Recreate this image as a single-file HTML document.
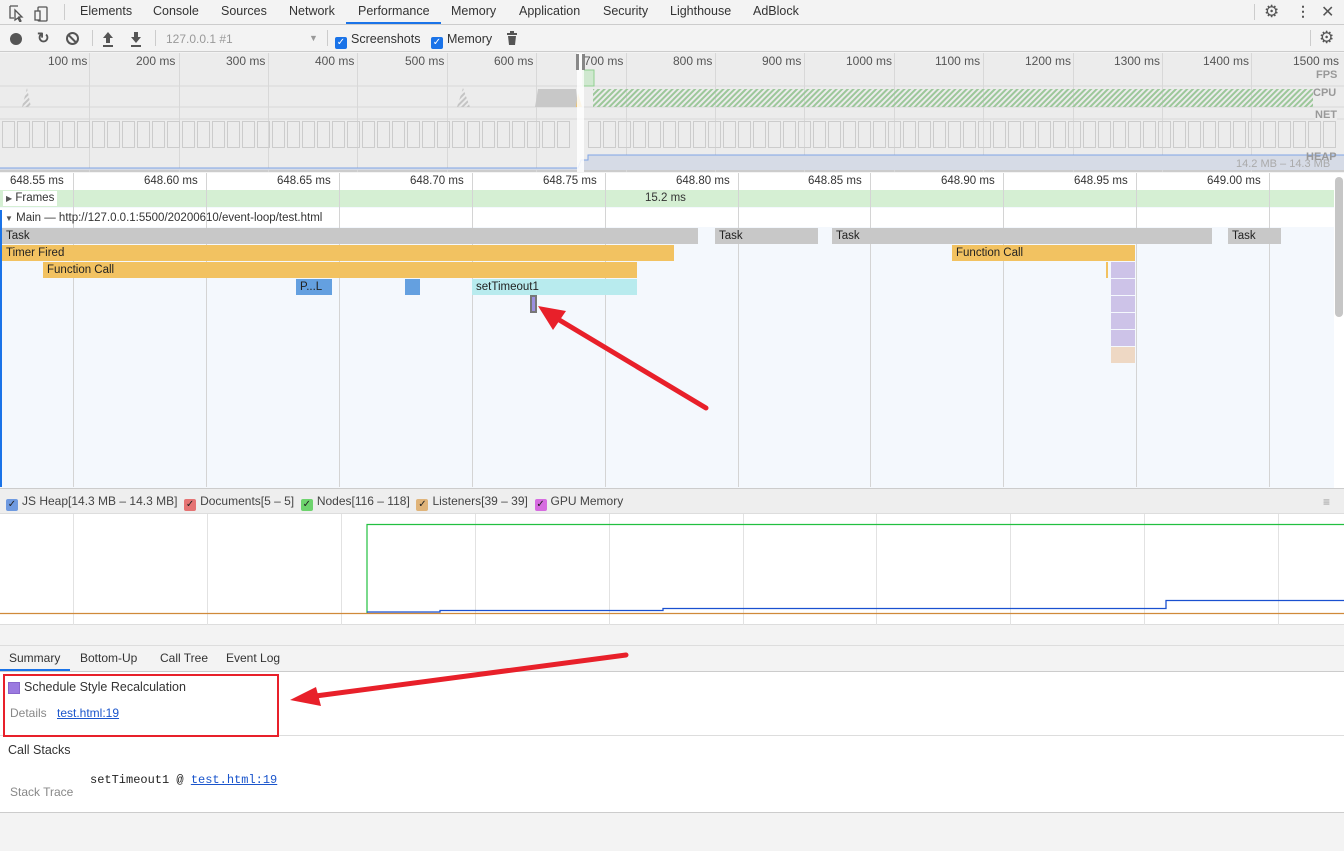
<!DOCTYPE html>
<html><head><meta charset="utf-8"><style>
*{box-sizing:border-box;margin:0;padding:0}
body{width:1344px;height:851px;overflow:hidden;font-family:"Liberation Sans",sans-serif;font-size:12px;color:#333;background:#f3f3f3;position:relative}
.a{position:absolute}
.t{position:absolute;top:4px;font-size:12.5px;color:#333}
.lab{position:absolute;font-size:12px;color:#333;white-space:nowrap}
.bar{position:absolute;height:16px;font-size:11.5px;line-height:16px;padding-left:4px;color:#222;overflow:hidden;white-space:nowrap}
.cb{display:inline-block;width:12px;height:12px;border-radius:2px;vertical-align:-2px;margin-right:4px;color:#fff;font-size:10px;line-height:12px;text-align:center}
</style></head><body>
<div class="a" style="left:0;top:0;width:1344px;height:25px;background:#f3f3f3;border-bottom:1px solid #ccc"></div>
<svg class="a" style="left:8px;top:4px" width="50" height="18"><path d="M2 2h8M2 2v12h4M7 6l7 7-3 0 2 4-1 1-2-4-3 2z" stroke="#555" fill="none" stroke-width="1.3"/><rect x="30" y="3" width="9" height="14" rx="1" stroke="#555" fill="none" stroke-width="1.3"/><rect x="27" y="7" width="5" height="9" stroke="#555" fill="#f3f3f3" stroke-width="1.3"/></svg>
<div class="a" style="left:64px;top:4px;width:1px;height:16px;background:#ccc"></div>
<div class="t" style="left:80px">Elements</div>
<div class="t" style="left:153px">Console</div>
<div class="t" style="left:221px">Sources</div>
<div class="t" style="left:289px">Network</div>
<div class="t" style="left:358px">Performance</div>
<div class="a" style="left:346px;top:22px;width:95px;height:2px;background:#1a73e8"></div>
<div class="t" style="left:451px">Memory</div>
<div class="t" style="left:519px">Application</div>
<div class="t" style="left:603px">Security</div>
<div class="t" style="left:670px">Lighthouse</div>
<div class="t" style="left:753px">AdBlock</div>
<div class="a" style="left:1254px;top:4px;width:1px;height:16px;background:#ccc"></div>
<div class="a" style="left:1264px;top:2px;font-size:17px;color:#555">⚙</div>
<div class="a" style="left:1296px;top:3px;font-size:14px;color:#555;font-weight:bold">⋮</div>
<div class="a" style="left:1321px;top:2px;font-size:16px;color:#555">✕</div>
<div class="a" style="left:0;top:26px;width:1344px;height:26px;background:#f3f3f3;border-bottom:1px solid #ccc"></div>
<div class="a" style="left:10px;top:33px;width:12px;height:12px;border-radius:50%;background:#555"></div>
<div class="a" style="left:37px;top:29px;font-size:15px;color:#555;font-weight:bold">↻</div>
<div class="a" style="left:66px;top:32px;width:13px;height:13px;border:2px solid #555;border-radius:50%"></div>
<div class="a" style="left:67px;top:38px;width:11px;height:2px;background:#555;transform:rotate(45deg)"></div>
<div class="a" style="left:92px;top:30px;width:1px;height:16px;background:#ccc"></div>
<svg class="a" style="left:102px;top:31px" width="42" height="16"><path d="M6 1l5 6H8v5H4V7H1z M1 14h10v2H1z" fill="#555"/><path d="M34 12l5-6h-3V1h-4v5h-3z M29 14h10v2H29z" fill="#555"/></svg>
<div class="a" style="left:155px;top:30px;width:1px;height:16px;background:#ccc"></div>
<div class="a" style="left:166px;top:32px;color:#999;font-size:12px">127.0.0.1 #1</div>
<div class="a" style="left:309px;top:33px;color:#999;font-size:9px">▼</div>
<div class="a" style="left:327px;top:30px;width:1px;height:16px;background:#ccc"></div>
<div class="a" style="left:335px;top:32px;font-size:12.5px"><span class="cb" style="background:#1a73e8">✓</span>Screenshots</div>
<div class="a" style="left:431px;top:32px;font-size:12.5px"><span class="cb" style="background:#1a73e8">✓</span>Memory</div>
<svg class="a" style="left:506px;top:31px" width="12" height="15"><rect x="1" y="2" width="10" height="2" fill="#555"/><rect x="4" y="0" width="4" height="2" fill="#555"/><path d="M2 5h8l-1 9H3z" fill="#555"/></svg>
<div class="a" style="left:1310px;top:30px;width:1px;height:16px;background:#ccc"></div>
<div class="a" style="left:1319px;top:28px;font-size:17px;color:#555">⚙</div>
<div class="a" style="left:0;top:53px;width:1344px;height:119px;background:#ececec;border-bottom:2px solid #ccc"></div>
<svg class="a" style="left:0;top:53px" width="1344" height="119">
<g stroke="#d8d8d8" stroke-width="1">
<line x1="89.5" y1="0" x2="89.5" y2="119"/><line x1="179.5" y1="0" x2="179.5" y2="119"/><line x1="268.5" y1="0" x2="268.5" y2="119"/><line x1="357.5" y1="0" x2="357.5" y2="119"/><line x1="447.5" y1="0" x2="447.5" y2="119"/><line x1="536.5" y1="0" x2="536.5" y2="119"/><line x1="626.5" y1="0" x2="626.5" y2="119"/><line x1="715.5" y1="0" x2="715.5" y2="119"/><line x1="804.5" y1="0" x2="804.5" y2="119"/><line x1="894.5" y1="0" x2="894.5" y2="119"/><line x1="983.5" y1="0" x2="983.5" y2="119"/><line x1="1073.5" y1="0" x2="1073.5" y2="119"/><line x1="1162.5" y1="0" x2="1162.5" y2="119"/><line x1="1251.5" y1="0" x2="1251.5" y2="119"/>
<line x1="0" y1="33" x2="1344" y2="33"/><line x1="0" y1="54" x2="1344" y2="54"/><line x1="0" y1="66" x2="1344" y2="66"/>
</g>
<defs><pattern id="h" width="4" height="4" patternUnits="userSpaceOnUse" patternTransform="rotate(45)"><rect width="2" height="4" fill="#9cc79a"/></pattern><pattern id="g" width="4" height="4" patternUnits="userSpaceOnUse" patternTransform="rotate(45)"><rect width="2" height="4" fill="#c4c4c4"/></pattern></defs>
<path d="M22 54 L27 35 L31 54z" fill="url(#g)"/><path d="M457 54 L463 35 L470 54z" fill="url(#g)"/>
<path d="M535 54 L538 36 L576 36 L578 54z" fill="#c8c8c8"/>
<path d="M576 54 L578 40 L582 54z" fill="#f2c261"/>
<rect x="593" y="36" width="720" height="18" fill="url(#h)"/>
<rect x="583" y="17" width="11" height="16" fill="#cfe8cf" stroke="#8fd08f"/>
<path d="M0 115 L578 115 L581 107 L588 107 L588 102 L1344 102 L1344 117 L0 117z" fill="#d6dbe6"/>
<path d="M0 115 L578 115 L581 107 L588 107 L588 102 L1344 102" fill="none" stroke="#7fa4e6"/>
<rect x="577" y="0" width="7" height="119" fill="#fff" opacity=".85"/>
<rect x="576" y="1" width="3" height="16" fill="#888"/><rect x="582" y="1" width="3" height="16" fill="#888"/>
</svg>
<svg class="a" style="left:0;top:120px" width="1344" height="28"><g fill="none" stroke="#cccccc">
<rect x="2.5" y="1.5" width="12" height="26"/><rect x="17.5" y="1.5" width="12" height="26"/><rect x="32.5" y="1.5" width="12" height="26"/><rect x="47.5" y="1.5" width="12" height="26"/><rect x="62.5" y="1.5" width="12" height="26"/><rect x="77.5" y="1.5" width="12" height="26"/><rect x="92.5" y="1.5" width="12" height="26"/><rect x="107.5" y="1.5" width="12" height="26"/><rect x="122.5" y="1.5" width="12" height="26"/><rect x="137.5" y="1.5" width="12" height="26"/><rect x="152.5" y="1.5" width="12" height="26"/><rect x="167.5" y="1.5" width="12" height="26"/><rect x="182.5" y="1.5" width="12" height="26"/><rect x="197.5" y="1.5" width="12" height="26"/><rect x="212.5" y="1.5" width="12" height="26"/><rect x="227.5" y="1.5" width="12" height="26"/><rect x="242.5" y="1.5" width="12" height="26"/><rect x="257.5" y="1.5" width="12" height="26"/><rect x="272.5" y="1.5" width="12" height="26"/><rect x="287.5" y="1.5" width="12" height="26"/><rect x="302.5" y="1.5" width="12" height="26"/><rect x="317.5" y="1.5" width="12" height="26"/><rect x="332.5" y="1.5" width="12" height="26"/><rect x="347.5" y="1.5" width="12" height="26"/><rect x="362.5" y="1.5" width="12" height="26"/><rect x="377.5" y="1.5" width="12" height="26"/><rect x="392.5" y="1.5" width="12" height="26"/><rect x="407.5" y="1.5" width="12" height="26"/><rect x="422.5" y="1.5" width="12" height="26"/><rect x="437.5" y="1.5" width="12" height="26"/><rect x="452.5" y="1.5" width="12" height="26"/><rect x="467.5" y="1.5" width="12" height="26"/><rect x="482.5" y="1.5" width="12" height="26"/><rect x="497.5" y="1.5" width="12" height="26"/><rect x="512.5" y="1.5" width="12" height="26"/><rect x="527.5" y="1.5" width="12" height="26"/><rect x="542.5" y="1.5" width="12" height="26"/><rect x="557.5" y="1.5" width="12" height="26"/>
<rect x="588.5" y="1.5" width="12" height="26"/><rect x="603.5" y="1.5" width="12" height="26"/><rect x="618.5" y="1.5" width="12" height="26"/><rect x="633.5" y="1.5" width="12" height="26"/><rect x="648.5" y="1.5" width="12" height="26"/><rect x="663.5" y="1.5" width="12" height="26"/><rect x="678.5" y="1.5" width="12" height="26"/><rect x="693.5" y="1.5" width="12" height="26"/><rect x="708.5" y="1.5" width="12" height="26"/><rect x="723.5" y="1.5" width="12" height="26"/><rect x="738.5" y="1.5" width="12" height="26"/><rect x="753.5" y="1.5" width="12" height="26"/><rect x="768.5" y="1.5" width="12" height="26"/><rect x="783.5" y="1.5" width="12" height="26"/><rect x="798.5" y="1.5" width="12" height="26"/><rect x="813.5" y="1.5" width="12" height="26"/><rect x="828.5" y="1.5" width="12" height="26"/><rect x="843.5" y="1.5" width="12" height="26"/><rect x="858.5" y="1.5" width="12" height="26"/><rect x="873.5" y="1.5" width="12" height="26"/><rect x="888.5" y="1.5" width="12" height="26"/><rect x="903.5" y="1.5" width="12" height="26"/><rect x="918.5" y="1.5" width="12" height="26"/><rect x="933.5" y="1.5" width="12" height="26"/><rect x="948.5" y="1.5" width="12" height="26"/><rect x="963.5" y="1.5" width="12" height="26"/><rect x="978.5" y="1.5" width="12" height="26"/><rect x="993.5" y="1.5" width="12" height="26"/><rect x="1008.5" y="1.5" width="12" height="26"/><rect x="1023.5" y="1.5" width="12" height="26"/><rect x="1038.5" y="1.5" width="12" height="26"/><rect x="1053.5" y="1.5" width="12" height="26"/><rect x="1068.5" y="1.5" width="12" height="26"/><rect x="1083.5" y="1.5" width="12" height="26"/><rect x="1098.5" y="1.5" width="12" height="26"/><rect x="1113.5" y="1.5" width="12" height="26"/><rect x="1128.5" y="1.5" width="12" height="26"/><rect x="1143.5" y="1.5" width="12" height="26"/><rect x="1158.5" y="1.5" width="12" height="26"/><rect x="1173.5" y="1.5" width="12" height="26"/><rect x="1188.5" y="1.5" width="12" height="26"/><rect x="1203.5" y="1.5" width="12" height="26"/><rect x="1218.5" y="1.5" width="12" height="26"/><rect x="1233.5" y="1.5" width="12" height="26"/><rect x="1248.5" y="1.5" width="12" height="26"/><rect x="1263.5" y="1.5" width="12" height="26"/><rect x="1278.5" y="1.5" width="12" height="26"/><rect x="1293.5" y="1.5" width="12" height="26"/><rect x="1308.5" y="1.5" width="12" height="26"/><rect x="1323.5" y="1.5" width="12" height="26"/>
</g></svg>
<div class="lab" style="left:48px;top:54px;color:#555">100 ms</div>
<div class="lab" style="left:136px;top:54px;color:#555">200 ms</div>
<div class="lab" style="left:226px;top:54px;color:#555">300 ms</div>
<div class="lab" style="left:315px;top:54px;color:#555">400 ms</div>
<div class="lab" style="left:405px;top:54px;color:#555">500 ms</div>
<div class="lab" style="left:494px;top:54px;color:#555">600 ms</div>
<div class="lab" style="left:584px;top:54px;color:#555">700 ms</div>
<div class="lab" style="left:673px;top:54px;color:#555">800 ms</div>
<div class="lab" style="left:762px;top:54px;color:#555">900 ms</div>
<div class="lab" style="left:846px;top:54px;color:#555">1000 ms</div>
<div class="lab" style="left:935px;top:54px;color:#555">1100 ms</div>
<div class="lab" style="left:1025px;top:54px;color:#555">1200 ms</div>
<div class="lab" style="left:1114px;top:54px;color:#555">1300 ms</div>
<div class="lab" style="left:1203px;top:54px;color:#555">1400 ms</div>
<div class="lab" style="left:1293px;top:54px;color:#555">1500 ms</div>
<div class="lab" style="left:1316px;top:69px;color:#999;font-weight:bold;font-size:11px">FPS</div>
<div class="lab" style="left:1313px;top:87px;color:#999;font-weight:bold;font-size:11px;background:#ececec">CPU</div>
<div class="lab" style="left:1315px;top:109px;color:#999;font-weight:bold;font-size:11px;background:#ececec">NET</div>
<div class="lab" style="left:1306px;top:151px;color:#999;font-weight:bold;font-size:11px">HEAP</div>
<div class="lab" style="left:1236px;top:158px;color:#aaa;font-size:11px">14.2 MB – 14.3 MB</div>
<div class="a" style="left:0;top:173px;width:1334px;height:315px;background:#f4f8fd"></div>
<div class="a" style="left:0;top:173px;width:1334px;height:17px;background:#fff"></div>
<div class="a" style="left:0;top:190px;width:1334px;height:17px;background:#d5efd3"></div>
<div class="a" style="left:0;top:208px;width:1334px;height:19px;background:#fff"></div>
<svg class="a" style="left:0;top:173px" width="1334" height="314"><g stroke="#d4d4d4"><line x1="73.5" y1="0" x2="73.5" y2="314"/><line x1="206.5" y1="0" x2="206.5" y2="314"/><line x1="339.5" y1="0" x2="339.5" y2="314"/><line x1="472.5" y1="0" x2="472.5" y2="314"/><line x1="605.5" y1="0" x2="605.5" y2="314"/><line x1="738.5" y1="0" x2="738.5" y2="314"/><line x1="870.5" y1="0" x2="870.5" y2="314"/><line x1="1003.5" y1="0" x2="1003.5" y2="314"/><line x1="1136.5" y1="0" x2="1136.5" y2="314"/><line x1="1269.5" y1="0" x2="1269.5" y2="314"/></g></svg>
<div class="a" style="left:0;top:210px;width:2px;height:277px;background:#1a73e8"></div>
<div class="lab" style="left:10px;top:175px;font-size:11.5px">648.55 ms</div>
<div class="lab" style="left:144px;top:175px;font-size:11.5px">648.60 ms</div>
<div class="lab" style="left:277px;top:175px;font-size:11.5px">648.65 ms</div>
<div class="lab" style="left:410px;top:175px;font-size:11.5px">648.70 ms</div>
<div class="lab" style="left:543px;top:175px;font-size:11.5px">648.75 ms</div>
<div class="lab" style="left:676px;top:175px;font-size:11.5px">648.80 ms</div>
<div class="lab" style="left:808px;top:175px;font-size:11.5px">648.85 ms</div>
<div class="lab" style="left:941px;top:175px;font-size:11.5px">648.90 ms</div>
<div class="lab" style="left:1074px;top:175px;font-size:11.5px">648.95 ms</div>
<div class="lab" style="left:1207px;top:175px;font-size:11.5px">649.00 ms</div>
<div class="lab" style="left:3px;top:191px;background:#fff;padding:0 3px;font-size:11.5px;line-height:14px"><span style="font-size:8px;color:#555">▶</span> Frames</div>
<div class="lab" style="left:645px;top:192px;font-size:11.5px">15.2 ms</div>
<div class="lab" style="left:5px;top:212px;font-size:11.5px"><span style="font-size:8px;color:#555">▼</span> Main — http://127.0.0.1:5500/20200610/event-loop/test.html</div>
<div class="bar" style="left:2px;top:228px;width:696px;background:#c8c8c8">Task</div>
<div class="bar" style="left:715px;top:228px;width:103px;background:#c8c8c8">Task</div>
<div class="bar" style="left:832px;top:228px;width:380px;background:#c8c8c8">Task</div>
<div class="bar" style="left:1228px;top:228px;width:53px;background:#c8c8c8">Task</div>
<div class="bar" style="left:2px;top:245px;width:672px;background:#f2c261">Timer Fired</div>
<div class="bar" style="left:43px;top:262px;width:594px;background:#f2c261">Function Call</div>
<div class="bar" style="left:952px;top:245px;width:183px;background:#f2c261">Function Call</div>
<div class="bar" style="left:296px;top:279px;width:36px;background:#64a0e0">P...L</div>
<div class="bar" style="left:405px;top:279px;width:15px;background:#64a0e0"></div>
<div class="bar" style="left:472px;top:279px;width:165px;background:#b8ebee">setTimeout1</div>
<div class="a" style="left:530px;top:295px;width:7px;height:18px;background:#9b8fe0;border:2px solid #777"></div>
<div class="a" style="left:1106px;top:262px;width:2px;height:16px;background:#f2c261"></div>
<div class="a" style="left:1111px;top:262px;width:24px;height:16px;background:#cdc3e8"></div>
<div class="a" style="left:1111px;top:279px;width:24px;height:16px;background:#cdc3e8"></div>
<div class="a" style="left:1111px;top:296px;width:24px;height:16px;background:#cdc3e8"></div>
<div class="a" style="left:1111px;top:313px;width:24px;height:16px;background:#cdc3e8"></div>
<div class="a" style="left:1111px;top:330px;width:24px;height:16px;background:#cdc3e8"></div>
<div class="a" style="left:1111px;top:347px;width:24px;height:16px;background:#eed8c4"></div>
<div class="a" style="left:1334px;top:173px;width:10px;height:315px;background:#fff"></div>
<div class="a" style="left:1335px;top:177px;width:8px;height:140px;background:#c6c6c6;border-radius:4px"></div>
<div class="a" style="left:0;top:488px;width:1344px;height:26px;background:#eeeeee;border-top:1px solid #ccc;border-bottom:1px solid #ddd"></div>
<div class="lab" style="left:6px;top:494px;font-size:12px;color:#444"><span class="cb" style="background:#6f9ae0;color:#222">✓</span>JS Heap[14.3 MB – 14.3 MB] &nbsp;<span class="cb" style="background:#e57373;color:#222">✓</span>Documents[5 – 5] &nbsp;<span class="cb" style="background:#6dd36d;color:#222">✓</span>Nodes[116 – 118] &nbsp;<span class="cb" style="background:#e0b47a;color:#222">✓</span>Listeners[39 – 39] &nbsp;<span class="cb" style="background:#d66be0;color:#222">✓</span>GPU Memory</div>
<div class="a" style="left:1323px;top:495px;color:#999;font-size:12px">≡</div>
<div class="a" style="left:0;top:514px;width:1344px;height:111px;background:#fff;border-bottom:1px solid #ddd"></div>
<svg class="a" style="left:0;top:514px" width="1344" height="111"><g stroke="#e2e2e2"><line x1="73.5" y1="0" x2="73.5" y2="111"/><line x1="207.5" y1="0" x2="207.5" y2="111"/><line x1="341.5" y1="0" x2="341.5" y2="111"/><line x1="475.5" y1="0" x2="475.5" y2="111"/><line x1="609.5" y1="0" x2="609.5" y2="111"/><line x1="743.5" y1="0" x2="743.5" y2="111"/><line x1="876.5" y1="0" x2="876.5" y2="111"/><line x1="1010.5" y1="0" x2="1010.5" y2="111"/><line x1="1144.5" y1="0" x2="1144.5" y2="111"/><line x1="1278.5" y1="0" x2="1278.5" y2="111"/></g>
<path d="M367 99 V10.5 H1344" fill="none" stroke="#22c040" stroke-width="1.2"/>
<path d="M0 99.5 H1344" stroke="#d08a3a" stroke-width="1.2"/>
<path d="M367 98 H440 V96.5 H663 V94.5 H1166 V86.5 H1344" fill="none" stroke="#1a50d0" stroke-width="1.3"/></svg>
<div class="a" style="left:0;top:645px;width:1344px;height:27px;background:#f3f3f3;border-top:1px solid #ddd;border-bottom:1px solid #ccc"></div>
<div class="lab" style="left:9px;top:651px">Summary</div>
<div class="a" style="left:0;top:669px;width:70px;height:2px;background:#1a73e8"></div>
<div class="lab" style="left:80px;top:651px">Bottom-Up</div>
<div class="lab" style="left:160px;top:651px">Call Tree</div>
<div class="lab" style="left:226px;top:651px">Event Log</div>
<div class="a" style="left:0;top:672px;width:1344px;height:141px;background:#fff;border-bottom:1px solid #ccc"></div>
<div class="a" style="left:0;top:735px;width:1344px;height:1px;background:#ddd"></div>
<div class="a" style="left:8px;top:682px;width:12px;height:12px;background:#9b7ae0;border:1px solid #8866cc"></div>
<div class="lab" style="left:24px;top:680px;font-size:12.5px">Schedule Style Recalculation</div>
<div class="lab" style="left:10px;top:706px;color:#888">Details</div>
<div class="lab" style="left:57px;top:706px;color:#1a55cc;text-decoration:underline">test.html:19</div>
<div class="a" style="left:3px;top:674px;width:276px;height:63px;border:2px solid #e8202a"></div>
<div class="lab" style="left:8px;top:743px;font-size:12.5px">Call Stacks</div>
<div class="lab" style="left:10px;top:785px;color:#888">Stack Trace</div>
<div class="lab" style="left:90px;top:773px;font-family:'Liberation Mono',monospace;font-size:12px;color:#222">setTimeout1 @ <span style="color:#1a55cc;text-decoration:underline">test.html:19</span></div>
<svg class="a" style="left:0;top:0" width="1344" height="851">
<line x1="706" y1="408" x2="556" y2="318" stroke="#e8202a" stroke-width="5" stroke-linecap="round"/>
<path d="M538 306 L566 311 L553 330z" fill="#e8202a"/>
<line x1="626" y1="655" x2="308" y2="697" stroke="#e8202a" stroke-width="5" stroke-linecap="round"/>
<path d="M290 700 L316 687 L321 706z" fill="#e8202a"/>
</svg>
</body></html>
